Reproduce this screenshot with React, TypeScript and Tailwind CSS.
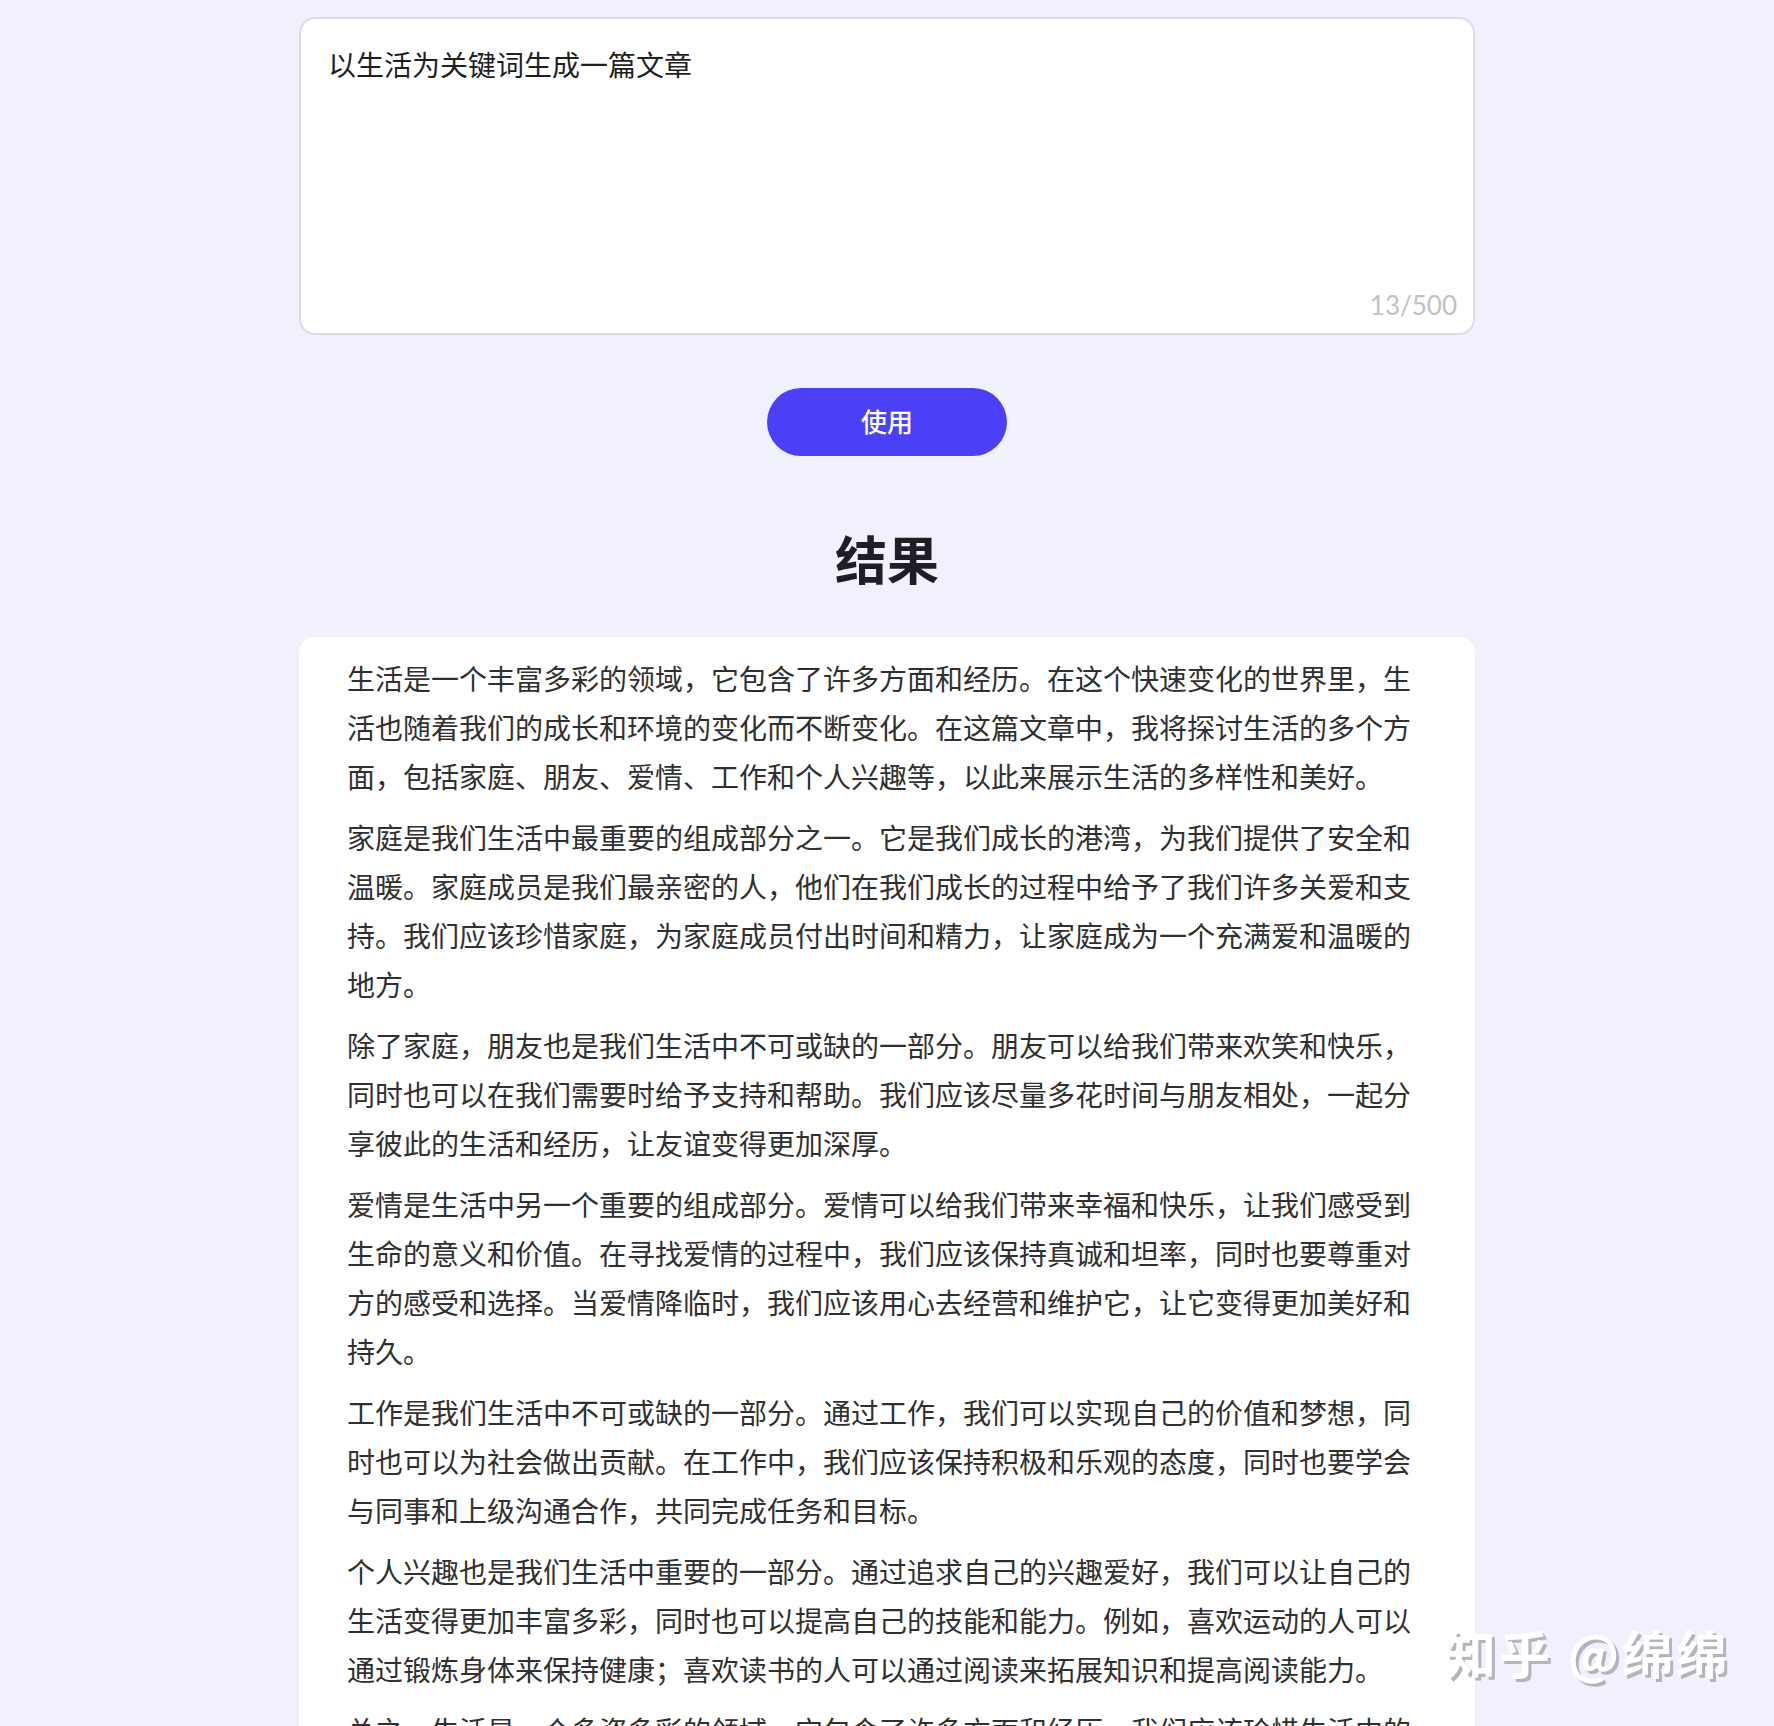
import React from "react"

const paragraphs = [
  "生活是一个丰富多彩的领域，它包含了许多方面和经历。在这个快速变化的世界里，生活也随着我们的成长和环境的变化而不断变化。在这篇文章中，我将探讨生活的多个方面，包括家庭、朋友、爱情、工作和个人兴趣等，以此来展示生活的多样性和美好。",
  "家庭是我们生活中最重要的组成部分之一。它是我们成长的港湾，为我们提供了安全和温暖。家庭成员是我们最亲密的人，他们在我们成长的过程中给予了我们许多关爱和支持。我们应该珍惜家庭，为家庭成员付出时间和精力，让家庭成为一个充满爱和温暖的地方。",
  "除了家庭，朋友也是我们生活中不可或缺的一部分。朋友可以给我们带来欢笑和快乐，同时也可以在我们需要时给予支持和帮助。我们应该尽量多花时间与朋友相处，一起分享彼此的生活和经历，让友谊变得更加深厚。",
  "爱情是生活中另一个重要的组成部分。爱情可以给我们带来幸福和快乐，让我们感受到生命的意义和价值。在寻找爱情的过程中，我们应该保持真诚和坦率，同时也要尊重对方的感受和选择。当爱情降临时，我们应该用心去经营和维护它，让它变得更加美好和持久。",
  "工作是我们生活中不可或缺的一部分。通过工作，我们可以实现自己的价值和梦想，同时也可以为社会做出贡献。在工作中，我们应该保持积极和乐观的态度，同时也要学会与同事和上级沟通合作，共同完成任务和目标。",
  "个人兴趣也是我们生活中重要的一部分。通过追求自己的兴趣爱好，我们可以让自己的生活变得更加丰富多彩，同时也可以提高自己的技能和能力。例如，喜欢运动的人可以通过锻炼身体来保持健康；喜欢读书的人可以通过阅读来拓展知识和提高阅读能力。",
  "总之，生活是一个多姿多彩的领域，它包含了许多方面和经历。我们应该珍惜生活中的每一个瞬间，用心去感受生活的美好，让自己的生活变得更加充实和有意义。",
]

export default function App() {
  const prompt = "以生活为关键词生成一篇文章"

  return (
    <div
      className="relative h-[1726px] overflow-hidden bg-[#f1f0fd]"
      style={{ fontFamily: '"Noto Sans CJK SC", "Noto Sans", sans-serif' }}
    >
      <div className="mx-auto flex w-[1176px] flex-col items-center pt-[17px]">
        {/* prompt input */}
        <div className="relative h-[318px] w-full rounded-2xl border-2 border-[#dcdce3] bg-white">
          <p className="px-[27px] pt-[24px] text-[28px] leading-[42px] text-[#1f1f1f]">{prompt}</p>
          <span className="absolute right-[16px] bottom-[8px] font-['Lato',sans-serif] text-[26px] font-normal text-[#c2c2c2]">
            {prompt.length}/500
          </span>
        </div>

        <button
          type="button"
          className="mt-[53px] h-[68px] w-[240px] rounded-full bg-[#4b40f6] pb-[3px] text-[26px] font-medium text-white"
        >
          使用
        </button>

        <h2 className="mt-[64px] text-[52px] leading-[76px] font-bold text-[#1e1e24]">结果</h2>

        {/* result card */}
        <div className="mt-[41px] w-full rounded-2xl bg-white px-[48px] pt-[17px] pb-10">
          {paragraphs.map((text, i) => (
            <p key={i} className="mb-[12px] text-[28px] leading-[49px] text-[#303030]">
              {text}
            </p>
          ))}
        </div>
      </div>

      {/* watermark */}
      <div className="absolute top-[1614px] right-[44px] text-[51px] font-bold tracking-[3px] text-white [text-shadow:3px_3px_0_#b4b4bc]">
        知乎 @绵绵
      </div>
    </div>
  )
}
